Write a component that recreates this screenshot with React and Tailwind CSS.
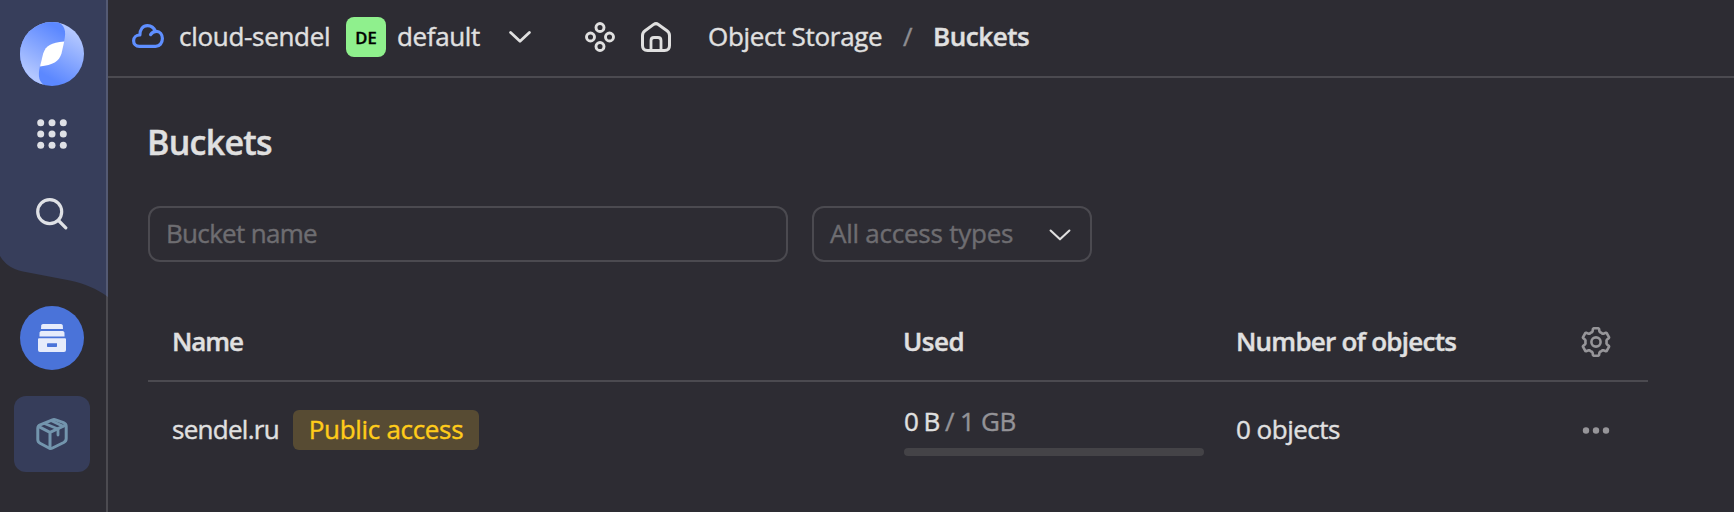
import React from "react";

function Logo() {
  return (
    <svg className="size-16" viewBox="0 0 64 64">
      <defs>
        <clipPath id="disc"><circle cx="32" cy="32" r="32" /></clipPath>
        <linearGradient id="right" gradientUnits="userSpaceOnUse" x1="56" y1="12" x2="30" y2="56">
          <stop offset="0" stopColor="#b3c7ff" />
          <stop offset="1" stopColor="#5c88ff" />
        </linearGradient>
        <linearGradient id="left" gradientUnits="userSpaceOnUse" x1="40" y1="8" x2="12" y2="54">
          <stop offset="0" stopColor="#5c88ff" />
          <stop offset="1" stopColor="#b3c7ff" />
        </linearGradient>
      </defs>
      <g clipPath="url(#disc)">
        <rect width="64" height="64" fill="url(#right)" />
        <path d="M0 0H38C44 3 47 8 44 20L20 44C17.500 54 19 61 26 64H0Z" fill="url(#left)" />
      </g>
      <path d="M44.200 19.600C31 21 26 23.500 23.200 31.500L20 44.400C33 43 39 39.500 41.500 31.500Z" fill="#fff" />
    </svg>
  );
}

function Dots() {
  return (
    <svg className="size-[30px]" viewBox="0 0 30 30" fill="#dfe1e6">
      {[3.7, 15, 26.3].map((y) => [3.7, 15, 26.3].map((x) => <circle key={`${x}-${y}`} cx={x} cy={y} r="3.500" />))}
    </svg>
  );
}

function Search() {
  return (
    <svg className="size-8" viewBox="0 0 32 32" fill="none" stroke="#dfe1e6" strokeWidth="3.200" strokeLinecap="round">
      <circle cx="13.700" cy="13.700" r="12" />
      <path d="M22.500 22.500L29.800 29.800" />
    </svg>
  );
}

function Archive() {
  return (
    <svg className="h-7 w-7" viewBox="0 0 28 28" fill="#e6ebfb">
      <path d="M5 0H23Q24.600 0 24.800 1.600L25 5H3L3.200 1.600Q3.400 0 5 0Z" />
      <path d="M3.300 7H24.700Q26.200 7 26.400 8.500L26.600 12.600H1.400L1.600 8.500Q1.800 7 3.300 7Z" />
      <path fillRule="evenodd" d="M1 14.300H27Q28 14.300 28 15.300V26Q28 28 26 28H2Q0 28 0 26V15.300Q0 14.300 1 14.300ZM9 20.200V22.300Q9 23 9.700 23H18.300Q19 23 19 22.300V19.300H9.700Q9 19.300 9 20.200Z" />
    </svg>
  );
}

function Box() {
  return (
    <svg className="size-8" viewBox="0 0 32 32" fill="none" stroke="#7395ad" strokeWidth="3" strokeLinecap="round" strokeLinejoin="round">
      <path d="M16.500 1.800Q18 1.200 19.600 1.800L27.500 4.700Q30.200 5.800 30.200 8.500V20.500Q30.200 23.200 27.700 24.500L16.500 30Q14.500 31 12.500 29.800L4 25.200Q1.800 24 1.800 21.500V10.500Q1.800 8 4.200 6.900Z" />
      <path d="M2.800 8.700L14 14.300L29 7.300M14 14.300V30" />
      <path d="M8.500 5.500L22 11V17M15.500 2.800L26.500 8" strokeWidth="2.800" />
    </svg>
  );
}

function Cloud() {
  return (
    <svg className="h-6 w-8" viewBox="0 0 32 24" fill="none" stroke="#5f8fff" strokeWidth="3.200" strokeLinecap="round" strokeLinejoin="round">
      <path d="M18.600 10.600C20 8.300 22 7.300 24.300 7.300C28 7.300 30.400 10.600 30.400 14.600C30.400 19 27.600 22.400 23.600 22.400H7.400C3.800 22.400 1.600 19.800 1.600 16.700C1.600 13.400 4.200 11 7.900 11C8 5.500 10.800 1.600 15.500 1.600C19 1.600 22 3.800 23.200 7.200" />
    </svg>
  );
}

function Chevron({ stroke }) {
  return (
    <svg className="h-3 w-[22px]" viewBox="0 0 22 12" fill="none" stroke="#e0e0e0" strokeWidth={stroke} strokeLinecap="round" strokeLinejoin="round">
      <path d="M1.600 1.500L11 10.300L20.400 1.500" />
    </svg>
  );
}

function Cluster() {
  return (
    <svg className="size-[30px]" viewBox="0 0 30 30" fill="none" stroke="#e0e0e0" strokeWidth="2.900">
      <circle cx="15" cy="5.500" r="4" />
      <circle cx="15" cy="24.500" r="4" />
      <circle cx="5.500" cy="15" r="4" />
      <circle cx="24.500" cy="15" r="4" />
    </svg>
  );
}

function Home() {
  return (
    <svg className="size-[30px]" viewBox="0 0 30 30" fill="none" stroke="#e0e0e0" strokeWidth="3" strokeLinejoin="round">
      <path d="M12.700 2.400Q15 .8 17.300 2.400L26 8.700Q28.500 10.500 28.500 13.500V23.500Q28.500 28.500 23.500 28.500H6.500Q1.500 28.500 1.500 23.500V13.500Q1.500 10.500 4 8.700Z" />
      <path d="M10 28.500V18.500Q10 15.500 13 15.500H17Q20 15.500 20 18.500V28.500" strokeWidth="2.800" />
    </svg>
  );
}

function Gear() {
  const tooth = [[-5.3, -9.2], [-4.1, -9.7], [-3.5, -10.5], [-3, -13.2], [-2.5, -13.7], [2.5, -13.7], [3, -13.2], [3.5, -10.5], [4.1, -9.7]];
  const points = Array.from({ length: 6 }, (_, k) => {
    const a = (k * Math.PI) / 3;
    return tooth.map(([x, y]) => `${(x * Math.cos(a) - y * Math.sin(a)).toFixed(2)},${(x * Math.sin(a) + y * Math.cos(a)).toFixed(2)}`);
  }).flat().join(" ");
  return (
    <svg className="size-[30px]" viewBox="-15 -15 30 30" fill="none" stroke="#969599" strokeWidth="2.600" strokeLinejoin="round">
      <polygon points={points} />
      <circle r="4.600" />
    </svg>
  );
}

function More() {
  return (
    <svg className="h-[7px] w-[30px]" viewBox="0 0 30 7" fill="#969599">
      <circle cx="5" cy="3.500" r="3.200" />
      <circle cx="15" cy="3.500" r="3.200" />
      <circle cx="25" cy="3.500" r="3.200" />
    </svg>
  );
}

function Sidebar() {
  return (
    <aside className="relative flex w-[108px] shrink-0 flex-col items-center border-r-2 border-white/15 pt-[22px] pr-0.5">
      <svg className="absolute top-0 left-0 -z-10 h-[300px] w-[108px]" viewBox="0 0 108 300" fill="#373e5b">
        <path d="M0 0H108V297C97 289 85 283.500 70 280.500L23 271.500C12 269.500 5 264 0 256Z" />
      </svg>
      <Logo />
      <div className="mt-[33px]"><Dots /></div>
      <div className="mt-[49px]"><Search /></div>
      <div className="mt-[76px] flex size-16 items-center justify-center rounded-full bg-[#4a73d9]">
        <Archive />
      </div>
      <div className="mt-[26px] flex size-[76px] items-center justify-center rounded-xl bg-[#363d5a]">
        <Box />
      </div>
    </aside>
  );
}

function TopBar() {
  return (
    <header className="flex h-[78px] items-center border-b-2 border-[#4b4a50] pb-0.5 pl-6">
      <span className="-mt-0.5"><Cloud /></span>
      <span className="ml-[15px] w-[167px] pb-0.5 tracking-[-0.3px]">cloud-sendel</span>
      <span className="flex size-10 shrink-0 items-center justify-center rounded-lg bg-[#8ff08d] pt-px text-[16.500px] font-semibold text-black">DE</span>
      <span className="ml-[11px] w-[112px] pb-0.5 tracking-[-0.37px]">default</span>
      <Chevron stroke="2.800" />
      <span className="ml-[54px]"><Cluster /></span>
      <span className="ml-[26px]"><Home /></span>
      <span className="ml-[37px] w-[194px] pb-0.5 tracking-[-0.31px]">Object Storage</span>
      <span className="w-[31px] pb-0.5 pl-px text-[#8e8d91]">/</span>
      <span className="pb-0.5 font-semibold tracking-[-0.45px]">Buckets</span>
    </header>
  );
}

function Filters() {
  return (
    <div className="mt-11 flex gap-6 text-[#6e6d71]">
      <div className="flex h-14 w-[640px] items-center rounded-xl border-2 border-[#4b4a50] pb-0.5 pl-4 tracking-[-0.69px]">Bucket name</div>
      <div className="flex h-14 w-[280px] items-center justify-between rounded-xl border-2 border-[#4b4a50] pr-[19px] pl-4">
        <span className="pb-0.5 tracking-[-0.24px]">All access types</span>
        <span className="pt-0.5"><Chevron stroke="2.100" /></span>
      </div>
    </div>
  );
}

function BucketTable() {
  return (
    <div className="mt-[38px] w-[1500px]">
      <div className="grid h-[82px] grid-cols-[732px_332px_345px_1fr] items-center border-b-2 border-[#4b4a50] pt-[3px] pl-6 font-semibold">
        <span className="pb-0.5 tracking-[-1.1px]">Name</span>
        <span className="-ml-px pb-0.5 tracking-[-0.47px]">Used</span>
        <span className="pb-0.5 tracking-[-0.76px]">Number of objects</span>
        <Gear />
      </div>
      <div className="grid h-[96px] grid-cols-[732px_332px_345px_1fr] items-center pl-6">
        <div className="flex items-center">
          <span className="w-[121px] pb-0.5 tracking-[-0.72px]">sendel.ru</span>
          <span className="flex h-10 w-[186px] items-center justify-center rounded-md bg-[#574b33] pb-0.5 tracking-[-0.31px] text-[#ffcc1a]">Public access</span>
        </div>
        <div className="flex flex-col gap-[11px]">
          <div className="flex h-8 items-center">
            <span className="w-[41px] tracking-[-1px]">0 B</span>
            <span className="w-[15px] text-[#949397]">/</span>
            <span className="tracking-[-0.33px] text-[#949397]">1 GB</span>
          </div>
          <div className="h-2 w-[300px] rounded bg-[#444347]" />
        </div>
        <span className="pb-0.5 tracking-[-0.5px]">0 objects</span>
        <More />
      </div>
    </div>
  );
}

export default function App() {
  return (
    <div className="isolate flex h-[512px] w-[1734px] overflow-hidden bg-[#2d2c33] font-['Open_Sans','Noto_Sans',sans-serif] text-[26px] leading-8 whitespace-nowrap text-[#e0e0e0] [-webkit-text-stroke:0.4px]">
      <Sidebar />
      <div className="flex-1">
        <TopBar />
        <main className="pl-10">
          <h1 className="-ml-px pt-11 text-[34px] leading-10 font-semibold tracking-[-0.73px]">Buckets</h1>
          <Filters />
          <BucketTable />
        </main>
      </div>
    </div>
  );
}
